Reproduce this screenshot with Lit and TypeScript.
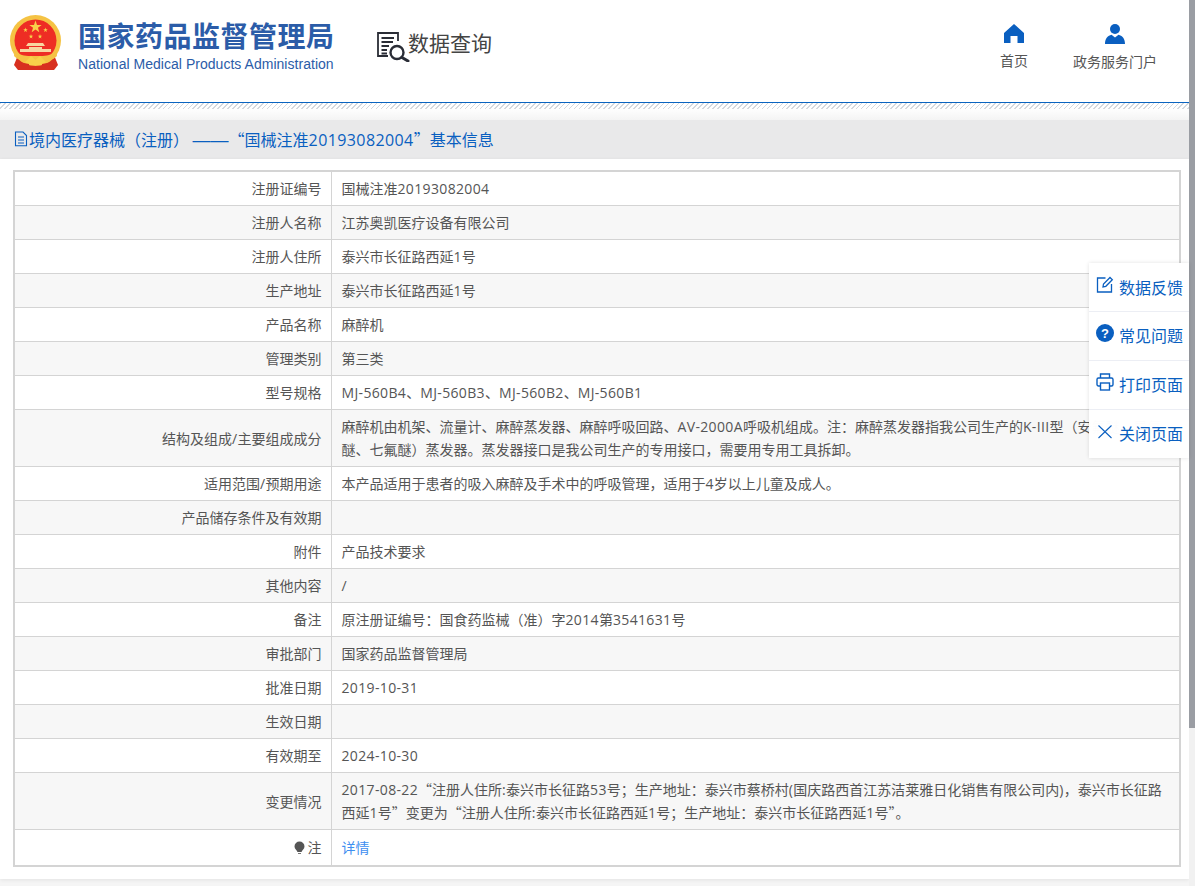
import { LitElement, html, css, svg, nothing } from "lit";
import { customElement } from "lit/decorators.js";

type Row = { label: string; value: string; link?: boolean; tip?: boolean };

const rows: Row[] = [
  { label: "注册证编号", value: "国械注准20193082004" },
  { label: "注册人名称", value: "江苏奥凯医疗设备有限公司" },
  { label: "注册人住所", value: "泰兴市长征路西延1号" },
  { label: "生产地址", value: "泰兴市长征路西延1号" },
  { label: "产品名称", value: "麻醉机" },
  { label: "管理类别", value: "第三类" },
  { label: "型号规格", value: "MJ-560B4、MJ-560B3、MJ-560B2、MJ-560B1" },
  {
    label: "结构及组成/主要组成成分",
    value:
      "麻醉机由机架、流量计、麻醉蒸发器、麻醉呼吸回路、AV-2000A呼吸机组成。注：麻醉蒸发器指我公司生产的K-III型（安氟醚、异氟\n醚、七氟醚）蒸发器。蒸发器接口是我公司生产的专用接口，需要用专用工具拆卸。",
  },
  { label: "适用范围/预期用途", value: "本产品适用于患者的吸入麻醉及手术中的呼吸管理，适用于4岁以上儿童及成人。" },
  { label: "产品储存条件及有效期", value: "" },
  { label: "附件", value: "产品技术要求" },
  { label: "其他内容", value: "/" },
  { label: "备注", value: "原注册证编号：国食药监械（准）字2014第3541631号" },
  { label: "审批部门", value: "国家药品监督管理局" },
  { label: "批准日期", value: "2019-10-31" },
  { label: "生效日期", value: "" },
  { label: "有效期至", value: "2024-10-30" },
  {
    label: "变更情况",
    value:
      "2017-08-22“注册人住所:泰兴市长征路53号；生产地址：泰兴市蔡桥村(国庆路西首江苏洁莱雅日化销售有限公司内)，泰兴市长征路\n西延1号”变更为“注册人住所:泰兴市长征路西延1号；生产地址：泰兴市长征路西延1号”。",
  },
  { label: "注", value: "详情", link: true, tip: true },
];

// latin runs get their own font, the cjk font would make digits too narrow
const mixed = (text: string) =>
  text.split(/(\n|[A-Za-z0-9\-\/:()]+)/).map((part, i) => {
    if (i % 2 === 0) return part;
    return part === "\n" ? html`<br />` : html`<span class="latin">${part}</span>`;
  });

const star = (cx: number, cy: number, r: number) => {
  const pts: string[] = [];
  for (let i = 0; i < 10; i++) {
    const rad = i % 2 ? r * 0.4 : r;
    const a = (Math.PI / 5) * i - Math.PI / 2;
    pts.push(`${(cx + rad * Math.cos(a)).toFixed(2)},${(cy + rad * Math.sin(a)).toFixed(2)}`);
  }
  return svg`<polygon points=${pts.join(" ")} fill="#f8d24a"/>`;
};

const emblem = svg`<svg class="emblem" viewBox="0 0 52 56" width="52" height="56">
  <path d="M8 40 L4 50 L8 55 L44 55 L48 50 L44 40 Z" fill="#d8301f"/>
  <circle cx="25.500" cy="25.500" r="25.500" fill="#f5c344"/>
  <circle cx="25.500" cy="25.500" r="21" fill="#ee2d24"/>
  ${star(25.5, 12, 6.5)}
  ${star(15.5, 15, 2.4)}
  ${star(35.5, 15, 2.4)}
  ${star(21, 21.5, 2.4)}
  ${star(30, 21.5, 2.4)}
  <path d="M18 28 H33 L35 31 H16 Z M19 32 H32 V34 H19 Z M10 34 H41 V37 H10 Z" fill="#f8d7a0"/>
  <path d="M5 35 C10 42 18 41 25.500 41 C33 41 41 42 46 35 L47 41 C41 47 33 46 25.500 46 C18 46 10 47 4 41 Z" fill="#f5c344"/>
  <path d="M15 47 L21 41 L25.500 45 L30 41 L36 47 L31 50 H20 Z" fill="#f8d24a"/>
  <path d="M8 47 L19 49 L19 55 L10 55 Z M43 47 L32 49 L32 55 L41 55 Z" fill="#d8301f"/>
</svg>`;

const searchDoc = svg`<svg class="query-icon" viewBox="0 0 33 30" width="33" height="30" fill="none" stroke="#2a2d36" stroke-width="1.800">
  <path d="M11 24 H1 V1 H21 V9"/>
  <path d="M4.500 6 H17 M4.500 10 H16 M4.500 14 H12 M4.500 18 H10 M4.500 21.500 H10"/>
  <circle cx="20" cy="20.500" r="6.500" stroke-width="2.400"/>
  <path d="M25 25.500 L31 29" stroke-width="3" stroke-linecap="round"/>
</svg>`;

const homeIcon = svg`<svg viewBox="0 0 20 19" width="20" height="19"><path fill="#0a5fc0" d="M10 0 L20 9 L20 19 L13.500 19 L13.500 12 L6.500 12 L6.500 19 L0 19 L0 9 Z"/></svg>`;
const userIcon = svg`<svg viewBox="0 0 20 20" width="20" height="20"><circle cx="10" cy="5" r="5" fill="#0a5fc0"/><path fill="#0a5fc0" d="M0 20 C0 14 3 12 6.500 10.800 L10 13.500 L13.500 10.800 C17 12 20 14 20 20 Z"/></svg>`;
const docIcon = svg`<svg viewBox="0 0 14 16" width="14" height="16" fill="none" stroke="#0a5fc0" stroke-width="1.100"><path d="M1.500 1 H9 L12.500 4.500 V14.800 H1.500 Z"/><path d="M4 6 H10 M4 9 H10 M4 12 H10"/></svg>`;
const bulbIcon = svg`<svg viewBox="0 0 11 14" width="11" height="14"><path fill="#555" d="M5.500 0.500 A5 5 0 0 1 10.500 5.500 C10.500 8 8 9 7.500 11 L3.500 11 C3 9 0.500 8 0.500 5.500 A5 5 0 0 1 5.500 0.500 Z"/><path stroke="#777" d="M4 12.500 H7"/></svg>`;

const editIcon = svg`<svg viewBox="0 0 17 17" width="17" height="17" fill="none" stroke="#0a5fc0" stroke-width="1.300"><path d="M9 2 H1 V16 H15 V8"/><path d="M6.500 11 L7 8 L13.500 1.500 L15.800 3.800 L9.300 10.300 Z"/></svg>`;
const helpIcon = html`<svg viewBox="0 0 18 18" width="18" height="18"><circle cx="9" cy="9" r="9" fill="#0a5fc0"/><text x="9" y="14" text-anchor="middle" font-size="13" font-weight="700" font-family="Liberation Sans" fill="#fff">?</text></svg>`;
const printIcon = svg`<svg viewBox="0 0 18 18" width="18" height="18" fill="none" stroke="#0a5fc0" stroke-width="1.400"><path d="M4.500 5 V1 H13.500 V5"/><rect x="1" y="5" width="16" height="8" rx="1.500"/><rect x="4.500" y="10" width="9" height="7" fill="#fff"/></svg>`;
const closeIcon = svg`<svg viewBox="0 0 18 15" width="18" height="15" fill="none" stroke="#0a5fc0" stroke-width="1.100"><path d="M2.500 1.500 L15.500 14 M15.500 1.500 L2.500 14"/></svg>`;

const sideItems = [
  { icon: editIcon, text: "数据反馈" },
  { icon: helpIcon, text: "常见问题" },
  { icon: printIcon, text: "打印页面" },
  { icon: closeIcon, text: "关闭页面" },
];

@customElement("app-root")
export class AppRoot extends LitElement {
  static styles = css`
    :host {
      display: flex;
      position: relative;
      height: 886px;
      overflow: hidden;
      background: #f5f5f5;
      font-family: "Noto Sans CJK SC", sans-serif;
      font-size: 14px;
      color: #555;
    }
    .latin {
      font-family: "Open Sans", sans-serif;
      letter-spacing: 0.025em;
    }
    .page {
      width: 1189px;
      flex: none;
    }
    .scrollbar {
      flex: 1;
      background: #f1f1f1;
    }
    .thumb {
      height: 728px;
      background: #9a9da3;
    }
    header {
      height: 102px;
      background: #fff;
      display: flex;
      align-items: flex-start;
      padding-left: 10px;
      box-sizing: border-box;
    }
    .emblem {
      margin-top: 15px;
      flex: none;
    }
    .brand {
      margin-left: 16px;
      margin-top: 14px;
      color: #2b5ca8;
      width: 270px;
      flex: none;
    }
    .brand-cn {
      font-size: 28px;
      font-weight: 700;
      line-height: 42px;
      white-space: nowrap;
      letter-spacing: 0.5px;
    }
    .brand-en {
      font-family: "Liberation Sans", sans-serif;
      font-size: 14px;
      line-height: 17px;
      white-space: nowrap;
      letter-spacing: 0.03px;
    }
    .query {
      display: flex;
      align-items: flex-start;
      margin-left: 29px;
      margin-top: 26px;
      font-size: 21px;
      line-height: 32px;
      color: #444;
    }
    .query-icon {
      margin-top: 6px;
      margin-right: -2px;
    }
    .nav {
      margin-left: auto;
      display: flex;
      margin-top: 24px;
      margin-right: 32px;
      gap: 45px;
    }
    .nav div {
      display: flex;
      flex-direction: column;
      align-items: center;
      gap: 8px;
      font-size: 14px;
      line-height: 18px;
      color: #555;
    }
    .rule {
      height: 1px;
      background: #0a64c0;
    }
    .strip {
      height: 17px;
      background:
        repeating-linear-gradient(135deg, #d6d9de 0 1.200px, #fff 1.200px 3.500px) top / 100% 6px no-repeat,
        linear-gradient(#fff 30%, #f4f4f4 100%);
    }
    .title {
      height: 39px;
      background: #e9e9ea;
      display: flex;
      align-items: center;
      padding-left: 14px;
      padding-bottom: 2px;
      box-sizing: border-box;
      gap: 1px;
      font-size: 16px;
      color: #0a5fc0;
      white-space: pre;
    }
    .dash {
      font-family: "Liberation Sans", sans-serif;
      font-size: 18px;
      line-height: 16px;
    }
    .card {
      background: #fff;
      height: 720px;
      padding: 11px 8px 0 13px;
      box-sizing: border-box;
      box-shadow: 0 1px 4px rgba(0, 0, 0, 0.08);
    }
    table {
      width: 1168px;
      table-layout: fixed;
      border-collapse: collapse;
      border: 2px solid #d4d4d4;
    }
    td {
      border: 1px solid #d4d4d4;
      padding: 5px 10px;
      line-height: 23px;
      box-sizing: border-box;
      height: 34px;
    }
    tr:nth-child(even) td {
      background: #f7f7f7;
    }
    tr:last-child td {
      height: 36px;
    }
    td.label {
      width: 317px;
      text-align: right;
      padding-right: 9px;
    }
    .link {
      color: #3f8ff0;
    }
    .tip svg {
      vertical-align: -2px;
      margin-right: 3px;
    }
    .side {
      position: absolute;
      left: 1089px;
      top: 263px;
      width: 100px;
      background: rgba(255, 255, 255, 0.985);
      box-shadow: 0 0 4px rgba(0, 0, 0, 0.12);
    }
    .side div {
      height: 49px;
      box-sizing: border-box;
      display: flex;
      align-items: center;
      gap: 5px;
      padding-left: 7px;
      padding-bottom: 2px;
      font-size: 16px;
      color: #0a5fc0;
      white-space: nowrap;
      overflow: hidden;
    }
    .side div:first-child {
      height: 48px;
      padding-bottom: 1px;
    }
    .side div + div {
      border-top: 1px solid #eceef4;
    }
    .side svg {
      flex: none;
      width: 18px;
      margin-top: -4px;
    }
  `;

  render() {
    return html`
      <div class="page">
        <header>
          ${emblem}
          <div class="brand">
            <div class="brand-cn">国家药品监督管理局</div>
            <div class="brand-en">National Medical Products Administration</div>
          </div>
          <div class="query">${searchDoc}<span>数据查询</span></div>
          <div class="nav">
            <div>${homeIcon}<span>首页</span></div>
            <div>${userIcon}<span>政务服务门户</span></div>
          </div>
        </header>
        <div class="rule"></div>
        <div class="strip"></div>
        <div class="title">
          ${docIcon}<span>境内医疗器械（注册） <span class="dash">——</span>${mixed("“国械注准20193082004”基本信息")}</span>
        </div>
        <div class="card">
          <table>
            <tbody>
              ${rows.map(
                (r) => html`<tr>
                  <td class="label ${r.tip ? "tip" : ""}">${r.tip ? bulbIcon : nothing}${mixed(r.label)}</td>
                  <td class=${r.link ? "link" : ""}>${mixed(r.value)}</td>
                </tr>`,
              )}
            </tbody>
          </table>
        </div>
      </div>
      <div class="scrollbar"><div class="thumb"></div></div>
      <div class="side">
        ${sideItems.map((s) => html`<div>${s.icon}<span>${s.text}</span></div>`)}
      </div>
    `;
  }
}
